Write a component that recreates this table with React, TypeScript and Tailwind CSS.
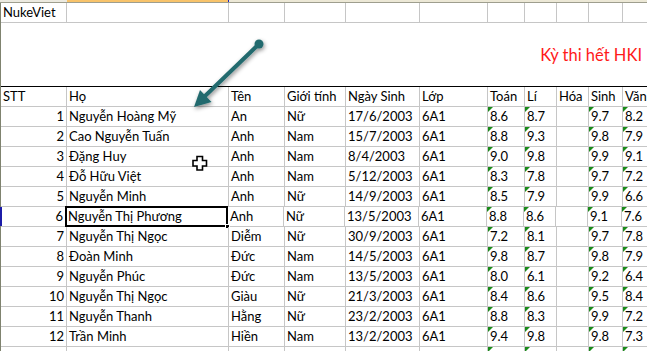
import React from "react";

type Row = {
  stt: number;
  ho: string;
  ten: string;
  gt: string;
  ns: string;
  lop: string;
  toan: string;
  li: string;
  sinh: string;
  van: string;
};

const rows: Row[] = [
  { stt: 1, ho: "Nguyễn Hoàng Mỹ", ten: "An", gt: "Nữ", ns: "17/6/2003", lop: "6A1", toan: "8.6", li: "8.7", sinh: "9.7", van: "8.2" },
  { stt: 2, ho: "Cao Nguyễn Tuấn", ten: "Anh", gt: "Nam", ns: "15/7/2003", lop: "6A1", toan: "8.8", li: "9.3", sinh: "9.8", van: "7.9" },
  { stt: 3, ho: "Đặng Huy", ten: "Anh", gt: "Nam", ns: "8/4/2003", lop: "6A1", toan: "9.0", li: "9.8", sinh: "9.9", van: "9.1" },
  { stt: 4, ho: "Đỗ Hữu Việt", ten: "Anh", gt: "Nam", ns: "5/12/2003", lop: "6A1", toan: "8.3", li: "7.8", sinh: "9.7", van: "7.2" },
  { stt: 5, ho: "Nguyễn Minh", ten: "Anh", gt: "Nữ", ns: "14/9/2003", lop: "6A1", toan: "8.5", li: "7.9", sinh: "9.9", van: "6.6" },
  { stt: 6, ho: "Nguyễn Thị Phương", ten: "Anh", gt: "Nữ", ns: "13/5/2003", lop: "6A1", toan: "8.8", li: "8.6", sinh: "9.1", van: "7.6" },
  { stt: 7, ho: "Nguyễn Thị Ngọc", ten: "Diễm", gt: "Nữ", ns: "30/9/2003", lop: "6A1", toan: "7.2", li: "8.1", sinh: "9.7", van: "7.8" },
  { stt: 8, ho: "Đoàn Minh", ten: "Đức", gt: "Nam", ns: "14/5/2003", lop: "6A1", toan: "9.8", li: "8.7", sinh: "9.8", van: "7.9" },
  { stt: 9, ho: "Nguyễn Phúc", ten: "Đức", gt: "Nam", ns: "13/5/2003", lop: "6A1", toan: "8.0", li: "6.1", sinh: "9.2", van: "6.4" },
  { stt: 10, ho: "Nguyễn Thị Ngọc", ten: "Giàu", gt: "Nữ", ns: "21/3/2003", lop: "6A1", toan: "8.4", li: "8.6", sinh: "9.5", van: "8.4" },
  { stt: 11, ho: "Nguyễn Thanh", ten: "Hằng", gt: "Nữ", ns: "23/2/2003", lop: "6A1", toan: "8.8", li: "8.3", sinh: "9.9", van: "7.2" },
  { stt: 12, ho: "Trần Minh", ten: "Hiền", gt: "Nam", ns: "13/2/2003", lop: "6A1", toan: "9.4", li: "9.8", sinh: "9.8", van: "7.3" },
];

const cell = "h-full shrink-0 border-r border-[#c6c6c6] px-[2px] whitespace-nowrap overflow-hidden";

// "number stored as text" marker
function Flag() {
  return (
    <span className="absolute left-0 top-0 h-0 w-0 border-t-[5px] border-r-[5px] border-t-[#1a8a1a] border-r-transparent" />
  );
}

function ScoreCell({ value, width, flag }: { value: string; width: string; flag: boolean }) {
  return (
    <div className={`${cell} ${width} relative`}>
      {flag && <Flag />}
      {value}
    </div>
  );
}

function DataRow({ r, selected }: { r: Row; selected: boolean }) {
  return (
    <div className="flex h-[20px] border-b border-[#c6c6c6] leading-[19px]">
      <div className={`${cell} w-[66px] text-right ${selected ? "border-l-2 border-l-[#1c1ca8] -ml-[1px]" : ""}`}>
        {r.stt}
      </div>
      <div className={`${cell} w-[162px] relative overflow-visible`}>
        {r.ho}
        {selected && (
          <>
            <span className="absolute -left-[1px] -top-[1px] h-[21px] w-[163px] border-2 border-black" />
            <span className="absolute -bottom-[3px] -right-[3px] h-[5px] w-[5px] border border-white bg-black" />
          </>
        )}
      </div>
      <div className={`${cell} w-[56px]`}>{r.ten}</div>
      <div className={`${cell} w-[61px]`}>{r.gt}</div>
      <div className={`${cell} w-[74px]`}>{r.ns}</div>
      <div className={`${cell} w-[68px]`}>{r.lop}</div>
      <ScoreCell value={r.toan} width="w-[37px]" flag />
      <ScoreCell value={r.li} width="w-[32px]" flag />
      <ScoreCell value="" width="w-[32px]" flag={false} />
      <ScoreCell value={r.sinh} width="w-[34px]" flag />
      <ScoreCell value={r.van} width="w-[60px]" flag />
    </div>
  );
}

export default function App() {
  const headers: [string, string][] = [
    ["STT", "w-[66px]"],
    ["Họ", "w-[162px]"],
    ["Tên", "w-[56px]"],
    ["Giới tính", "w-[61px]"],
    ["Ngày Sinh", "w-[74px]"],
    ["Lớp", "w-[68px]"],
    ["Toán", "w-[37px]"],
    ["Lí", "w-[32px]"],
    ["Hóa", "w-[32px]"],
    ["Sinh", "w-[34px]"],
    ["Văn", "w-[60px]"],
  ];
  const widths = headers.map((h) => h[1]);

  return (
    <div className="relative h-[351px] w-[647px] overflow-hidden bg-white font-['Lato',sans-serif] text-[13px] text-black">
      {/* bottom of the column heading bar */}
      <div className="flex h-[3px] border-b border-[#9e9e8e]">
        <div className="w-[67px] shrink-0 bg-[#eceae0]" />
        <div className="w-[162px] shrink-0 border-r border-[#2020c0] bg-[#f8c36a]" />
        <div className="flex-1 bg-[#ece8d6]" />
      </div>

      <div className="border-l border-[#7f836f]">
        {/* NukeViet row */}
        <div className="flex h-[20px] border-b border-[#c6c6c6] leading-[19px]">
          {widths.map((w, i) => (
            <div key={i} className={`${cell} ${w}`}>
              {i === 0 ? "NukeViet" : ""}
            </div>
          ))}
        </div>

        {/* merged title area */}
        <div className="flex h-[63px] items-start justify-end pr-[5px] pt-[22px]">
          <span className="text-[16.5px] leading-[20px] text-[#ff1a1a]">Kỳ thi hết HKI</span>
        </div>

        {/* header row */}
        <div className="flex h-[21px] border-t border-b border-t-black border-b-[#c6c6c6] leading-[19px]">
          {headers.map(([label, w]) => (
            <div key={label} className={`${cell} ${w}`}>
              {label}
            </div>
          ))}
        </div>

        {rows.map((r) => (
          <DataRow key={r.stt} r={r} selected={r.stt === 6} />
        ))}

        {/* partially visible next row */}
        <div className="flex h-[20px]">
          {widths.map((w, i) => (
            <div key={i} className={`${cell} ${w} relative`}>
              {(i === 6 || i === 7 || i === 9 || i === 10) && <Flag />}
            </div>
          ))}
        </div>
      </div>

      {/* callout arrow */}
      <svg className="pointer-events-none absolute left-0 top-0" width="647" height="351">
        <defs>
          <filter id="sh" x="-20%" y="-20%" width="140%" height="140%">
            <feDropShadow dx="1" dy="2" stdDeviation="2" floodColor="#000" floodOpacity="0.45" />
          </filter>
        </defs>
        <g filter="url(#sh)" fill="#216a6e" stroke="#216a6e">
          <line x1="259" y1="44" x2="204" y2="97" strokeWidth="4" strokeLinecap="round" />
          <circle cx="259" cy="44" r="4.5" stroke="none" />
          <polygon points="194,107 211.5,102 200,90" stroke="none" />
        </g>
      </svg>

      {/* cell cursor */}
      <svg className="pointer-events-none absolute left-[192px] top-[155px]" width="16" height="16" viewBox="0 0 16 16">
        <path
          d="M5 1.5h5.5v4h4v5.5h-4v4h-5.5v-4h-4v-5.5h4z"
          fill="#fff"
          stroke="#000"
          strokeWidth="1.6"
        />
      </svg>
    </div>
  );
}
